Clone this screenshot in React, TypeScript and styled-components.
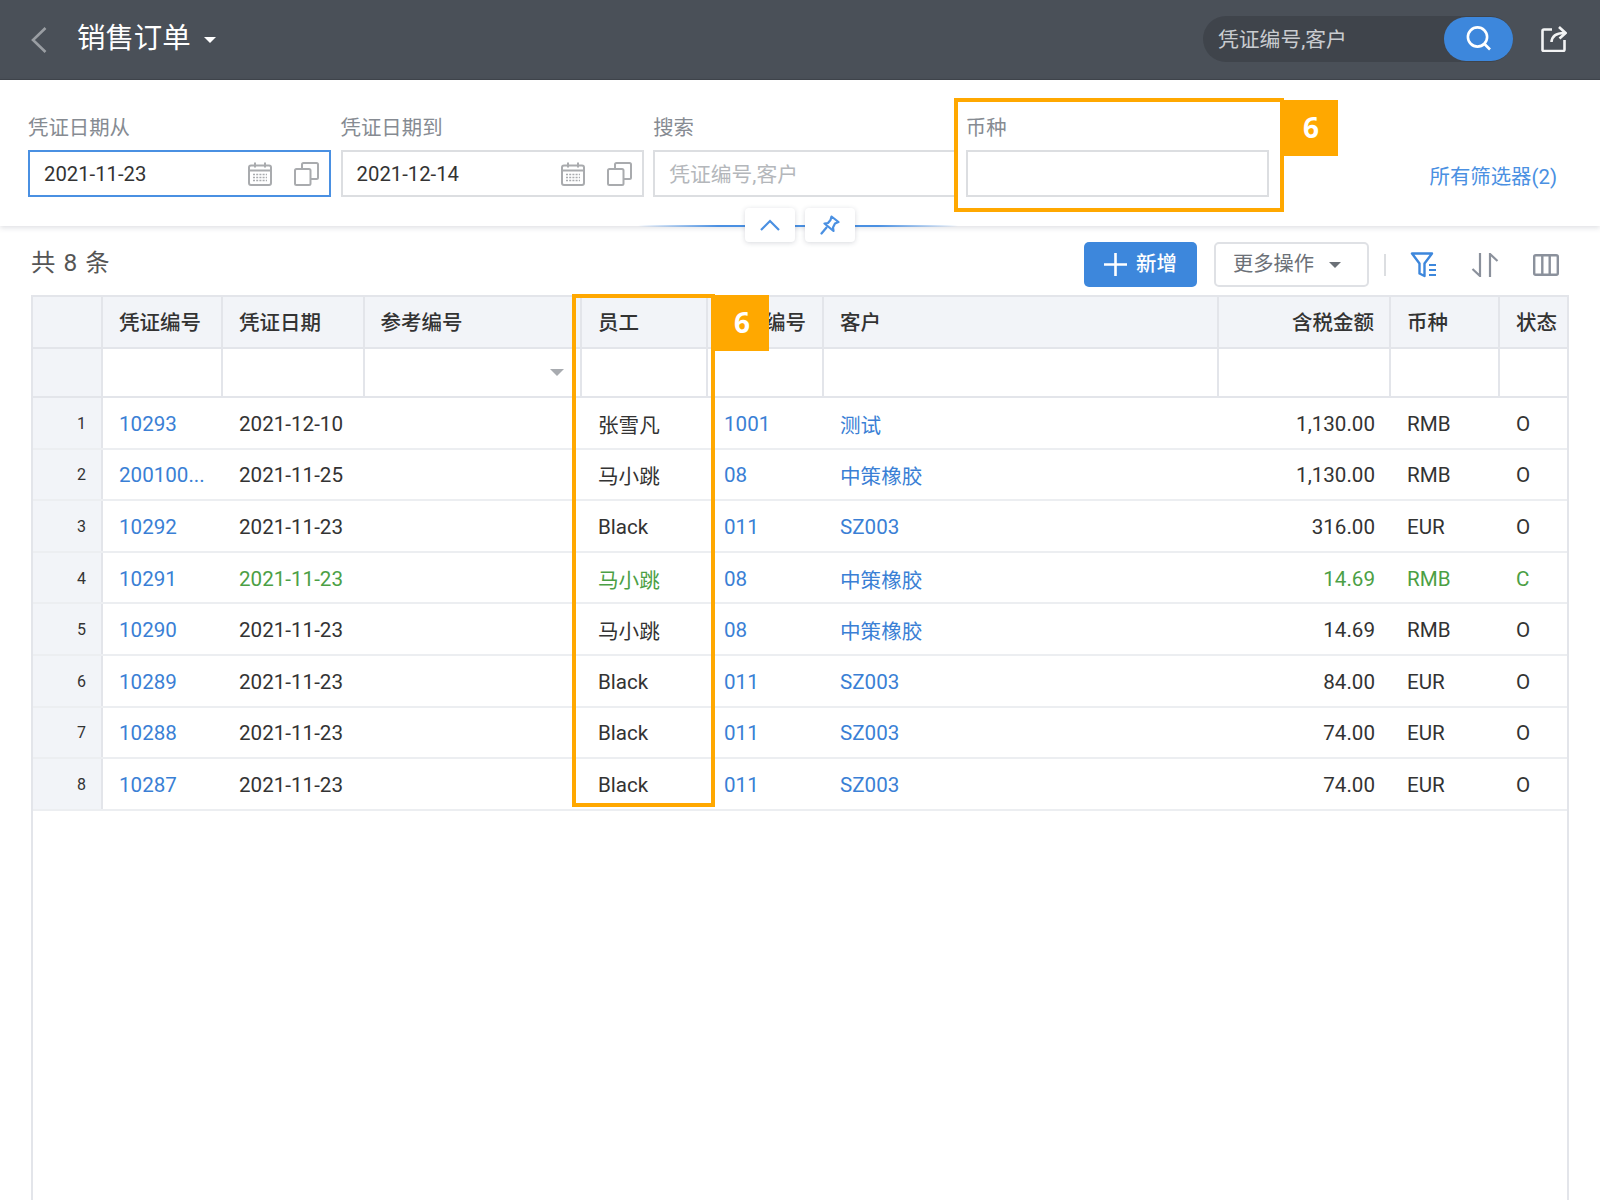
import React from "react";
import styled, { createGlobalStyle } from "styled-components";

const Global = createGlobalStyle`
  html, body { margin: 0; padding: 0; background: #fff; }
  body { font-family: Roboto, "Noto Sans CJK SC", sans-serif; overflow: hidden; }
  * { box-sizing: border-box; }
`;

const Page = styled.div`
  position: relative;
  width: 1600px;
  height: 1200px;
  overflow: hidden;
  display: flex;
  flex-direction: column;
  background: #fff;
`;

const TopBar = styled.header`
  height: 80px;
  flex: none;
  background: #4a5058;
  border-bottom: 1px solid #3f444b;
  display: flex;
  align-items: center;
  padding: 0 33px 0 31px;
  color: #fff;
`;

const BackIcon = styled.svg`
  width: 16px;
  height: 26px;
  margin-right: 30px;
  flex: none;
`;

const Title = styled.h1`
  margin: 0;
  font-size: 28.4px;
  font-weight: 400;
  line-height: 40px;
  color: #fff;
  margin-top: -1px;
`;

const TitleCaret = styled.span`
  width: 0;
  height: 0;
  margin: 0 0 0 13px;
  border-left: 6px solid transparent;
  border-right: 6px solid transparent;
  border-top: 6px solid #fff;
`;

const SearchPill = styled.div`
  margin-left: auto;
  width: 310px;
  height: 46px;
  margin-top: -2px;
  border-radius: 23px;
  background: #3f444b;
  display: flex;
  align-items: center;
  justify-content: space-between;
  padding: 0 0 0 15px;
`;

const SearchHint = styled.span`
  font-size: 20.8px;
  color: #c9ccd0;
  line-height: 28px;
  margin-top: 2px;
`;

const SearchButton = styled.button`
  width: 69px;
  height: 44px;
  border: 0;
  padding: 0;
  border-radius: 22px;
  background: #3d87dc;
  display: flex;
  align-items: center;
  justify-content: center;
`;

const ExportIcon = styled.svg`
  width: 26px;
  height: 27px;
  margin-left: 28px;
  margin-top: -2px;
  flex: none;
`;

const FilterPanel = styled.section`
  height: 146px;
  flex: none;
  padding: 32px 43px 0 28px;
  display: flex;
  align-items: flex-start;
  justify-content: space-between;
  box-shadow: 0 2px 5px rgba(60, 70, 90, 0.16);
  position: relative;
`;

const FieldGrid = styled.div`
  display: grid;
  grid-template-columns: repeat(4, 303px);
  column-gap: 9.6px;
`;

const Field = styled.div`
  display: flex;
  flex-direction: column;
  gap: 8px;
`;

const FieldLabel = styled.label`
  font-size: 20.4px;
  line-height: 30px;
  color: #868b92;
  margin-top: 1px;
  margin-bottom: -1px;
`;

const InputBox = styled.div<{ $active?: boolean }>`
  height: 47px;
  border: 2px solid ${(p) => (p.$active ? "#4a90e2" : "#dcdee1")};
  display: flex;
  align-items: center;
  padding: 0 10px 0 14px;
  gap: 22px;
`;

const InputValue = styled.span<{ $hint?: boolean }>`
  flex: 1;
  font-size: ${(p) => (p.$hint ? "20.8px" : "20.3px")};
  color: ${(p) => (p.$hint ? "#b4b7bb" : "#333")};
  white-space: nowrap;
  margin-top: ${(p) => (p.$hint ? "-2px" : "0")};
`;

const AllFilters = styled.a`
  margin-top: 50px;
  font-size: 20.4px;
  line-height: 30px;
  color: #4a90e2;
`;

const CollapseRail = styled.div`
  position: absolute;
  left: 638px;
  width: 320px;
  top: 145px;
  height: 2px;
  background: linear-gradient(90deg, rgba(74, 144, 226, 0), #4a90e2 25%, #4a90e2 75%, rgba(74, 144, 226, 0));
`;

const RailButtons = styled.div`
  position: absolute;
  left: 745px;
  top: 128px;
  display: flex;
  gap: 10px;
`;

const RailButton = styled.button`
  width: 50px;
  height: 34px;
  padding: 0;
  border: 0;
  border-radius: 4px;
  background: #fff;
  box-shadow: 0 1px 5px rgba(60, 70, 90, 0.2);
  display: flex;
  align-items: center;
  justify-content: center;
`;

const Toolbar = styled.div`
  height: 69px;
  flex: none;
  display: flex;
  align-items: center;
  padding: 8px 41px 0 31px;
`;

const Count = styled.span`
  font-size: 24.4px;
  color: #555;
  margin-top: -9px;
  word-spacing: 2px;
`;

const AddButton = styled.button`
  margin-left: auto;
  width: 113px;
  height: 45px;
  border: 0;
  border-radius: 5px;
  background: #3d87dc;
  color: #fff;
  font-family: inherit;
  font-size: 20.4px;
  font-weight: 500;
  display: flex;
  align-items: center;
  justify-content: center;
  gap: 9px;
  padding: 0;
  line-height: 1;
`;

const AddLabel = styled.span`
  margin-top: -1px;
`;

const MoreButton = styled.button`
  margin-left: 17px;
  width: 155px;
  height: 45px;
  border: 2px solid #dfe1e5;
  border-radius: 5px;
  background: #fff;
  color: #6b7077;
  font-family: inherit;
  font-size: 20.3px;
  display: flex;
  align-items: center;
  padding: 0 0 0 17px;
  gap: 15px;
  line-height: 1;
`;

const MoreLabel = styled.span`
  margin-top: -1px;
`;

const MoreCaret = styled.span`
  width: 0;
  height: 0;
  border-left: 6px solid transparent;
  border-right: 6px solid transparent;
  border-top: 6px solid #6b7077;
`;

const Divider = styled.span`
  width: 2px;
  height: 22px;
  background: #dcdee1;
  margin: 0 24px 0 15px;
`;

const ToolIcon = styled.svg<{ $gap?: number }>`
  flex: none;
  margin-left: ${(p) => p.$gap ?? 0}px;
`;

const TableWrap = styled.div`
  margin-left: 31px;
  width: 1538px;
  flex: 1;
  border: 2px solid #e3e5ea;
  border-bottom: 0;
  background: #fff;
`;

const columns = "70px 120px 141.5px 217.5px 126px 116px 395px 172px 109px 1fr";

const HeadRow = styled.div`
  display: grid;
  grid-template-columns: ${columns};
  height: 52px;
  background: #f2f4f8;
  border-bottom: 2px solid #e3e5ea;
`;

const HeadCell = styled.div<{ $right?: boolean }>`
  display: flex;
  align-items: center;
  justify-content: ${(p) => (p.$right ? "flex-end" : "flex-start")};
  padding: 0 15px 3px 16px;
  font-size: 20.5px;
  font-weight: 500;
  color: #333;
  border-right: 2px solid #e3e5ea;
  white-space: nowrap;
  overflow: hidden;
  &:last-child { border-right: 0; }
`;

const FilterRow = styled.div`
  display: grid;
  grid-template-columns: ${columns};
  height: 49px;
  border-bottom: 2px solid #e3e5ea;
`;

const FilterCell = styled.div<{ $index?: boolean }>`
  display: flex;
  align-items: center;
  justify-content: flex-end;
  padding: 0 16px 0 0;
  background: ${(p) => (p.$index ? "#f2f4f8" : "#fff")};
  border-right: 2px solid #e3e5ea;
  &:last-child { border-right: 0; }
`;

const FilterCaret = styled.span`
  width: 0;
  height: 0;
  border-left: 7px solid transparent;
  border-right: 7px solid transparent;
  border-top: 7px solid #a8abb0;
`;

const DataRow = styled.div`
  display: grid;
  grid-template-columns: ${columns};
  height: 51.6px;
  border-bottom: 2px solid #eceef1;
`;

const IndexCell = styled.div`
  background: #f2f4f8;
  border-right: 2px solid #e3e5ea;
  font-size: 16px;
  color: #333;
  display: flex;
  align-items: center;
  justify-content: flex-end;
  padding: 1px 15px 0 0;
`;

const Cell = styled.div<{ $tone?: "link" | "green" | "plain"; $right?: boolean }>`
  display: flex;
  align-items: center;
  justify-content: ${(p) => (p.$right ? "flex-end" : "flex-start")};
  padding: 2px 16px 0 16px;
  font-size: 20.6px;
  white-space: nowrap;
  color: ${(p) =>
    p.$tone === "link" ? "#3a7fd5" : p.$tone === "green" ? "#4c9f45" : "#333"};
`;

const Highlight = styled.div`
  position: absolute;
  border: 4px solid #ffa800;
  pointer-events: none;
`;

const Badge = styled.div`
  position: absolute;
  width: 54px;
  height: 56px;
  padding-bottom: 2px;
  background: #ffa800;
  color: #fff;
  font-family: "Open Sans", "Liberation Sans", sans-serif;
  font-size: 28px;
  font-weight: 700;
  display: flex;
  align-items: center;
  justify-content: center;
`;

const CalendarIcon = () => (
  <svg width="24" height="24" viewBox="0 0 24 24" fill="none" stroke="#a9abae" strokeWidth="2" style={{ flex: "none" }}>
    <rect x="1" y="3.5" width="22" height="19.5" rx="2" />
    <path d="M1.5 8.5h21M7 0.5v5M17 0.5v5" />
    <path d="M5 12.5h14M5 15.5h14M5 18.5h14" strokeDasharray="2 1.2" strokeWidth="1.6" />
  </svg>
);

const CopyIcon = () => (
  <svg width="25" height="24" viewBox="0 0 25 24" fill="none" stroke="#a9abae" strokeWidth="2" style={{ flex: "none" }}>
    <rect x="1" y="7" width="15.5" height="16" rx="1.5" />
    <path d="M8 7V2.5A1.5 1.5 0 0 1 9.5 1h13A1.5 1.5 0 0 1 24 2.5v13a1.5 1.5 0 0 1-1.5 1.5h-6" />
  </svg>
);

const rows = [
  ["10293", "2021-12-10", "张雪凡", "1001", "测试", "1,130.00", "RMB", "O"],
  ["200100...", "2021-11-25", "马小跳", "08", "中策橡胶", "1,130.00", "RMB", "O"],
  ["10292", "2021-11-23", "Black", "011", "SZ003", "316.00", "EUR", "O"],
  ["10291", "2021-11-23", "马小跳", "08", "中策橡胶", "14.69", "RMB", "C"],
  ["10290", "2021-11-23", "马小跳", "08", "中策橡胶", "14.69", "RMB", "O"],
  ["10289", "2021-11-23", "Black", "011", "SZ003", "84.00", "EUR", "O"],
  ["10288", "2021-11-23", "Black", "011", "SZ003", "74.00", "EUR", "O"],
  ["10287", "2021-11-23", "Black", "011", "SZ003", "74.00", "EUR", "O"],
];

const heads = ["", "凭证编号", "凭证日期", "参考编号", "员工", "客户编号", "客户", "含税金额", "币种", "状态"];

export default function App() {
  return (
    <Page>
      <Global />
      <TopBar>
        <BackIcon viewBox="0 0 16 26" fill="none" stroke="#9a9ea3" strokeWidth="2.6">
          <path d="M14.5 1L2 13l12.5 12" />
        </BackIcon>
        <Title>销售订单</Title>
        <TitleCaret />
        <SearchPill>
          <SearchHint>凭证编号,客户</SearchHint>
          <SearchButton aria-label="搜索">
            <svg width="27" height="27" viewBox="0 0 27 27" fill="none" stroke="#fff" strokeWidth="2.6">
              <circle cx="12.5" cy="12" r="9.6" />
              <path d="M19.5 19l5.5 5.5" />
            </svg>
          </SearchButton>
        </SearchPill>
        <ExportIcon viewBox="0 0 26 27" fill="none" stroke="#f2f3f4" strokeWidth="2.6">
          <path d="M11 4.500H3a1.500 1.500 0 0 0-1.500 1.500v19A1.500 1.500 0 0 0 3 26h19a1.500 1.500 0 0 0 1.500-1.500V15" />
          <path d="M10.500 17c.5-6 4.500-9 12.500-9" />
          <path d="M18 2l6.500 6-6 5.500" />
        </ExportIcon>
      </TopBar>

      <FilterPanel>
        <FieldGrid>
          <Field>
            <FieldLabel>凭证日期从</FieldLabel>
            <InputBox $active>
              <InputValue>2021-11-23</InputValue>
              <CalendarIcon />
              <CopyIcon />
            </InputBox>
          </Field>
          <Field>
            <FieldLabel>凭证日期到</FieldLabel>
            <InputBox>
              <InputValue>2021-12-14</InputValue>
              <CalendarIcon />
              <CopyIcon />
            </InputBox>
          </Field>
          <Field>
            <FieldLabel>搜索</FieldLabel>
            <InputBox>
              <InputValue $hint>凭证编号,客户</InputValue>
            </InputBox>
          </Field>
          <Field>
            <FieldLabel>币种</FieldLabel>
            <InputBox />
          </Field>
        </FieldGrid>
        <AllFilters>所有筛选器(2)</AllFilters>
        <CollapseRail />
        <RailButtons>
          <RailButton aria-label="收起">
            <svg width="20" height="12" viewBox="0 0 20 12" fill="none" stroke="#4a90e2" strokeWidth="2.2">
              <path d="M1 11l9-9 9 9" />
            </svg>
          </RailButton>
          <RailButton aria-label="固定">
            <svg width="20" height="20" viewBox="0 0 20 20" fill="none" stroke="#4a90e2" strokeWidth="2.2" strokeLinejoin="round" strokeLinecap="round">
              <path d="M11.500 1.500l7 5.500-3.500 1.500-2 4 .5 3.500-9-7.500 3.500-.5 2.500-3z" />
              <path d="M6.500 12.500L1.500 18.500" />
            </svg>
          </RailButton>
        </RailButtons>
      </FilterPanel>

      <Toolbar>
        <Count>共 8 条</Count>
        <AddButton>
          <svg width="23" height="23" viewBox="0 0 23 23" stroke="#fff" strokeWidth="2.6">
            <path d="M11.500 0v23M0 11.500h23" />
          </svg>
          <AddLabel>新增</AddLabel>
        </AddButton>
        <MoreButton>
          <MoreLabel>更多操作</MoreLabel>
          <MoreCaret />
        </MoreButton>
        <Divider />
        <ToolIcon width="28" height="26" viewBox="0 0 28 26" fill="none" stroke="#3d87dc" strokeWidth="2.4" strokeLinejoin="round">
          <path d="M2 1.500h20l-7.500 10v12.500l-5-2.500v-10z" />
          <path d="M19 13h7M19 18h7M19 23h7" strokeWidth="2.2" />
        </ToolIcon>
        <ToolIcon $gap={33} width="28" height="24" viewBox="0 0 28 24" fill="none" stroke="#8b919c" strokeWidth="2.2">
          <path d="M9 0v23L1.500 16" />
          <path d="M19 24V1l7.500 7" />
        </ToolIcon>
        <ToolIcon $gap={34} width="26" height="22" viewBox="0 0 26 22" fill="none" stroke="#8b919c" strokeWidth="2.4">
          <rect x="1.200" y="1.200" width="23.600" height="19.600" rx="1.500" />
          <path d="M9.300 1.200v19.600M16.700 1.200v19.600" />
        </ToolIcon>
      </Toolbar>

      <TableWrap>
        <HeadRow>
          {heads.map((h, i) => (
            <HeadCell key={i} $right={i === 7}>{h}</HeadCell>
          ))}
        </HeadRow>
        <FilterRow>
          {heads.map((_, i) => (
            <FilterCell key={i} $index={i === 0}>{i === 3 ? <FilterCaret /> : null}</FilterCell>
          ))}
        </FilterRow>
        {rows.map((r, i) => {
          const tone = i === 3 ? "green" : "plain";
          return (
            <DataRow key={i}>
              <IndexCell>{i + 1}</IndexCell>
              <Cell $tone="link">{r[0]}</Cell>
              <Cell $tone={tone}>{r[1]}</Cell>
              <Cell />
              <Cell $tone={tone}>{r[2]}</Cell>
              <Cell $tone="link">{r[3]}</Cell>
              <Cell $tone="link">{r[4]}</Cell>
              <Cell $tone={tone} $right>{r[5]}</Cell>
              <Cell $tone={tone}>{r[6]}</Cell>
              <Cell $tone={tone}>{r[7]}</Cell>
            </DataRow>
          );
        })}
      </TableWrap>

      <Highlight style={{ left: 954, top: 98, width: 330, height: 114 }} />
      <Badge style={{ left: 1284, top: 100 }}>6</Badge>
      <Highlight style={{ left: 572, top: 294, width: 143, height: 513 }} />
      <Badge style={{ left: 715, top: 295 }}>6</Badge>
    </Page>
  );
}
